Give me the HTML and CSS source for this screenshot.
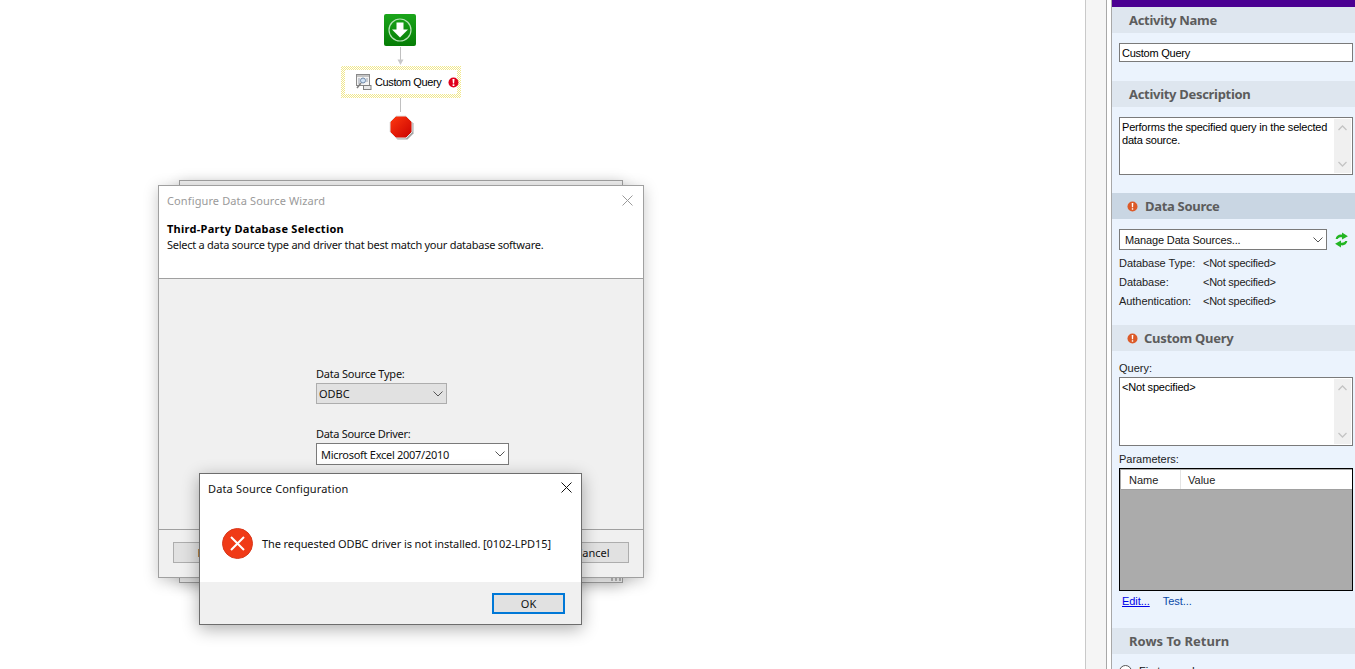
FILE: index.html
```html
<!DOCTYPE html>
<html lang="en">
<head>
<meta charset="utf-8">
<title>Custom Query</title>
<link rel="stylesheet" href="styles.css">
</head>
<body>
<main class="canvas">
  <svg class="node node-start" viewBox="0 0 32 32" width="32" height="32">
    <defs>
      <linearGradient id="g1" x1="0" y1="0" x2="0" y2="1"><stop offset="0" stop-color="#1aa51a"/><stop offset="1" stop-color="#067d06"/></linearGradient>
    </defs>
    <rect x="0" y="0" width="32" height="32" rx="2" fill="url(#g1)"/>
    <circle cx="16" cy="16" r="11" fill="none" stroke="#b5e2b5" stroke-width="1.2"/>
    <path d="M12.5 8.5h7v7h4.500l-8 8-8-8h4.500z" fill="#fff"/>
  </svg>
  <svg class="node node-link-a" viewBox="0 0 9 19" width="9" height="19">
    <path d="M4.500 0v13" stroke="#c0c0c0" stroke-width="1" fill="none"/>
    <path d="M1.500 12.500h6l-3 5.500z" fill="#c8c8c8"/>
  </svg>
  <div class="node node-activity">
    <svg class="activity-icon" viewBox="0 0 17 17" width="17" height="17">
      <rect x="1.500" y="0.500" width="13" height="11" fill="#f4f4f4" stroke="#8a8a8a"/>
      <rect x="2" y="1" width="12" height="2" fill="#c4c4c4"/>
      <path d="M3 5h2M3 7h2M3 9h2M11 5h2M11 7h2" stroke="#9aa3b0"/>
      <circle cx="8" cy="6.500" r="2.500" fill="#cfe2f5" stroke="#6f88a8"/>
      <path d="M6 9 2 14" stroke="#7d7d7d" stroke-width="1.500"/>
      <rect x="8.500" y="11.500" width="7.500" height="4" fill="#e9e9e9" stroke="#808080"/>
    </svg>
    <span class="activity-label">Custom Query</span>
    <svg class="activity-error" viewBox="0 0 11 11" width="11" height="11">
      <circle cx="5.500" cy="5.500" r="5" fill="#e0001b"/>
      <path d="M4.500 2h2l-.4 4.500h-1.200z" fill="#fff"/><rect x="4.600" y="7.300" width="1.800" height="1.700" fill="#fff"/>
    </svg>
  </div>
  <div class="node node-link-b"></div>
  <svg class="node node-stop" viewBox="0 0 26 26" width="26" height="26">
    <defs>
      <linearGradient id="g2" x1="0" y1="0" x2="1" y2="1"><stop offset="0" stop-color="#ff3a10"/><stop offset="1" stop-color="#c90000"/></linearGradient>
    </defs>
    <path d="M8.500 2.500h10l6 6v10l-6 6h-10l-6-6v-10z" fill="#a5a5a5"/>
    <path d="M7 1h10l6 6v10l-6 6H7l-6-6V7z" fill="url(#g2)" stroke="#e2e2e2"/>
  </svg>

  <div class="window window-back"><span class="gripper"></span></div>

  <section class="window wizard">
    <header class="wizard-head">
      <div class="wizard-titlebar">
        <span class="wizard-title">Configure Data Source Wizard</span>
        <svg class="close close-muted" viewBox="0 0 11 11" width="11" height="11"><path d="M.5.5l10 10M10.500.5l-10 10"/></svg>
      </div>
      <h1 class="wizard-heading">Third-Party Database Selection</h1>
      <p class="wizard-sub">Select a data source type and driver that best match your database software.</p>
    </header>
    <div class="wizard-body">
      <label class="field-label">Data Source Type:</label>
      <div class="combo combo-disabled">ODBC
        <svg class="chev" viewBox="0 0 10 6" width="10" height="6"><path d="M.5.5 5 5 9.500.5"/></svg>
      </div>
      <label class="field-label field-label-second">Data Source Driver:</label>
      <div class="combo combo-driver">Microsoft Excel 2007/2010
        <svg class="chev" viewBox="0 0 10 6" width="10" height="6"><path d="M.5.5 5 5 9.500.5"/></svg>
      </div>
    </div>
    <footer class="wizard-foot">
      <span class="btn">Help</span>
      <span class="btn">Cancel</span>
    </footer>
  </section>

  <section class="window msgbox">
    <div class="msg-main">
      <div class="msg-titlebar">
        <span>Data Source Configuration</span>
        <svg class="close" viewBox="0 0 11 11" width="11" height="11"><path d="M.5.5l10 10M10.500.5l-10 10"/></svg>
      </div>
      <div class="msg-content">
        <svg class="msg-icon" viewBox="0 0 31 31" width="31" height="31">
          <circle cx="15.500" cy="15.500" r="15" fill="#f03a17" stroke="#d8391c" stroke-width="1"/>
          <path d="M9 9l13 13M22 9 9 22" stroke="#fff" stroke-width="2" fill="none"/>
        </svg>
        <span>The requested ODBC driver is not installed. [0102-LPD15]</span>
      </div>
    </div>
    <div class="msg-foot"><span class="btn btn-default">OK</span></div>
  </section>
</main>

<div class="strip"></div>

<aside class="panel">
  <div class="panel-top"></div>

  <h2 class="sec-head">Activity Name</h2>
  <div class="sec-body body-name">
    <div class="text-input">Custom Query</div>
  </div>

  <h2 class="sec-head">Activity Description</h2>
  <div class="sec-body body-desc">
    <div class="text-area area-desc">Performs the specified query in the selected<br>data source.
      <div class="scroll">
        <svg viewBox="0 0 9 6" width="9" height="6"><path d="M.5 5 4.500 1l4 4"/></svg>
        <svg viewBox="0 0 9 6" width="9" height="6"><path d="M.5 1l4 4 4-4"/></svg>
      </div>
    </div>
  </div>

  <h2 class="sec-head sec-head-strong sec-warn">
    <svg class="warn" viewBox="0 0 11 11" width="11" height="11"><circle cx="5.500" cy="5.500" r="5" fill="#dc5a28"/><path d="M4.700 2h1.600l-.2 4.300H4.900z" fill="#fff"/><rect x="4.800" y="7.200" width="1.400" height="1.500" fill="#fff"/></svg>
    Data Source</h2>
  <div class="sec-body body-source">
    <div class="source-row">
      <div class="combo combo-source">Manage Data Sources...
        <svg class="chev" viewBox="0 0 10 6" width="10" height="6"><path d="M.5.5 5 5 9.500.5"/></svg>
      </div>
      <svg class="refresh" viewBox="0 0 14 15" width="15" height="16">
        <path d="M1.500 6.500C2 3.500 4.500 2 7.500 2.500V.5L13 4 7.500 7V5C5.500 4.800 4 5.300 3.500 6.500z" fill="#22b522"/>
        <path d="M12.500 8.500c-.5 3-3 4.500-6 4v2L1 11l5.500-3v2c2 .2 3.500-.3 4-1.500z" fill="#22b522"/>
      </svg>
    </div>
    <dl class="facts">
      <dt>Database Type:</dt><dd>&lt;Not specified&gt;</dd>
      <dt>Database:</dt><dd>&lt;Not specified&gt;</dd>
      <dt>Authentication:</dt><dd>&lt;Not specified&gt;</dd>
    </dl>
  </div>

  <h2 class="sec-head sec-warn sec-warn-tight">
    <svg class="warn" viewBox="0 0 11 11" width="11" height="11"><circle cx="5.500" cy="5.500" r="5" fill="#dc5a28"/><path d="M4.700 2h1.600l-.2 4.300H4.900z" fill="#fff"/><rect x="4.800" y="7.200" width="1.400" height="1.500" fill="#fff"/></svg>
    Custom Query</h2>
  <div class="sec-body body-query">
    <div class="small-label">Query:</div>
    <div class="text-area area-query">&lt;Not specified&gt;
      <div class="scroll">
        <svg viewBox="0 0 9 6" width="9" height="6"><path d="M.5 5 4.500 1l4 4"/></svg>
        <svg viewBox="0 0 9 6" width="9" height="6"><path d="M.5 1l4 4 4-4"/></svg>
      </div>
    </div>
    <div class="small-label label-params">Parameters:</div>
    <div class="grid">
      <div class="grid-head"><span class="col-name">Name</span><span class="col-value">Value</span></div>
      <div class="grid-empty"></div>
    </div>
    <div class="links"><a class="link-edit">Edit...</a><a class="link-test">Test...</a></div>
  </div>

  <h2 class="sec-head sec-head-wide">Rows To Return</h2>
  <div class="sec-body body-rows">
    <div class="radio-row"><span class="radio"></span>First record</div>
  </div>
</aside>
</body>
</html>
```
FILE: styles.css
```css
* { box-sizing: border-box; }
html, body { height: 100%; }
body {
  margin: 0;
  height: 669px;
  display: flex;
  overflow: hidden;
  background: #fff;
  font-family: "Noto Sans", "Liberation Sans", sans-serif;
  font-size: 11px;
  color: #111;
}

/* Free canvas: diagram nodes and floating windows */
.canvas { position: relative; flex: 0 0 1085px; height: 669px; background: #fff; }
.node { position: absolute; display: block; }
.node-start { left: 384px; top: 14px; }
.node-link-a { left: 396px; top: 47px; }
.node-activity {
  left: 341px; top: 66px; width: 120px; height: 32px;
  display: flex; align-items: center;
  padding-left: 10px;
  border: 4px solid transparent;
  background:
    linear-gradient(#fff, #fff) padding-box,
    repeating-conic-gradient(#f0e78c 0 25%, #fff 0 50%) 0 0 / 2px 2px border-box;
}
.activity-icon { flex: none; }
.activity-label { margin: 0 0 1px 3px; font-family: "Liberation Sans", sans-serif; letter-spacing: -.38px; color: #000; white-space: nowrap; }
.activity-error { flex: none; margin-left: 7px; }
.node-link-b { left: 400px; top: 98px; width: 1px; height: 14px; background: #c0c0c0; }
.node-stop { left: 389px; top: 115px; }

.window {
  position: absolute;
  background: #f0f0f0;
  border: 1px solid #a0a0a0;
  box-shadow: 0 3px 14px rgba(0,0,0,.22);
}
.window-back { left: 179px; top: 180px; width: 444px; height: 403px; }
.gripper {
  position: absolute; right: 1px; bottom: 1px; width: 10px; height: 4px;
  background: repeating-linear-gradient(90deg, #b5b5b5 0 2px, transparent 2px 4px);
}
.wizard {
  left: 158px; top: 185px; width: 486px; height: 393px;
  display: flex; flex-direction: column;
}
.wizard-head { height: 93px; background: #fff; border-bottom: 1px solid #a0a0a0; padding: 0 8px; flex: none; }
.wizard-titlebar { height: 28px; display: flex; justify-content: space-between; align-items: center; color: #9a9a9a; letter-spacing: .12px; }
.close { flex: none; margin-right: 2px; }
.close path { stroke: #111; stroke-width: 1; fill: none; }
.close-muted path { stroke: #9a9a9a; }
.wizard-heading { margin: 8px 0 0; font-size: 11px; line-height: 14px; font-weight: 700; letter-spacing: .27px; color: #000; }
.wizard-sub { margin: 2px 0 0; line-height: 14px; color: #111; letter-spacing: -.26px; }
.wizard-body { flex: 1; padding: 88px 0 0 157px; background: #f0f0f0; }
.field-label { display: block; line-height: 14px; letter-spacing: -.25px; margin-bottom: 2px; }
.field-label-second { margin-top: 23px; letter-spacing: -.3px; }
.combo {
  position: relative; display: flex; align-items: center;
  background: #fff; border: 1px solid #7a7a7a; color: #111;
}
.chev { position: absolute; right: 3px; top: 50%; margin-top: -3px; }
.chev path { fill: none; stroke: #555; stroke-width: 1; }
.combo-disabled { width: 131px; height: 21px; padding-left: 2px; background: #e1e1e1; border-color: #adadad; }
.combo-driver { width: 193px; height: 22px; padding-left: 4px; letter-spacing: -.28px; }
.wizard-foot {
  flex: none; height: 48px; display: flex; justify-content: space-between;
  padding: 12px 14px 0; background: #f0f0f0; border-top: 1px solid #a0a0a0;
}
.btn {
  width: 73px; height: 21px; display: flex; align-items: center; justify-content: center;
  background: #e1e1e1; border: 1px solid #adadad; color: #111;
}
.msgbox {
  left: 199px; top: 473px; width: 383px; height: 152px;
  display: flex; flex-direction: column;
  border-color: #6d6d6d;
  box-shadow: 0 4px 16px rgba(0,0,0,.32);
}
.msg-main { flex: 0 0 108px; background: #fff; }
.msg-titlebar { height: 29px; padding: 0 8px; display: flex; align-items: center; justify-content: space-between; letter-spacing: .15px; }
.msg-titlebar .close { margin: -2px 1px 0 0; }
.msg-content { display: flex; align-items: center; gap: 9px; padding: 25px 0 0 22px; letter-spacing: -.09px; }
.msg-icon { flex: none; }
.msg-foot { flex: 1; display: flex; justify-content: flex-end; padding: 11px 16px 0 0; background: #f0f0f0; }
.btn-default { border: 2px solid #0078d7; }

/* Strip between the canvas and the panel */
.strip {
  flex: 0 0 27px; height: 669px;
  background: linear-gradient(90deg, #c9c9c9 0 1px, #f5f5f5 1px 21px, #a8a8a8 21px 22px, #fff 22px 26px, #a8a8a8 26px);
}

/* Property panel */
.panel { flex: 1; min-width: 0; height: 669px; background: #ebf3fd; overflow: hidden; font-family: "Liberation Sans", sans-serif; }
.panel-top { height: 7px; background: #4b0092; }
.sec-head {
  margin: 0; height: 26px; padding-left: 17px;
  display: flex; align-items: center;
  background: #dee6ef; color: #5c5c5c;
  font-size: 13px; font-weight: 700;
  font-family: "Noto Sans", sans-serif;
  letter-spacing: -.3px;
}
.sec-head-strong { background: #c9d6e3; }
.sec-head-wide { letter-spacing: 0; }
.sec-warn { padding-left: 15px; gap: 7px; }
.sec-warn-tight { gap: 6px; }
.warn { flex: none; }
.sec-body { padding: 0 2px 0 7px; }
.body-name { height: 48px; padding-top: 10px; }
.body-desc { height: 86px; padding-top: 10px; }
.body-source { height: 106px; padding-top: 10px; }
.body-query { height: 277px; padding-top: 11px; }
.body-rows { padding-top: 11px; }
.text-input { height: 19px; background: #fff; border: 1px solid #7a7a7a; padding: 1px 0 0 2px; line-height: 17px; letter-spacing: -.25px; color: #000; }
.text-area { position: relative; background: #fff; border: 1px solid #7a7a7a; padding: 3px 2px 0; line-height: 13px; letter-spacing: -.2px; color: #000; }
.area-desc { height: 58px; }
.area-query { height: 69px; margin-top: 2px; }
.scroll {
  position: absolute; right: 1px; top: 1px; bottom: 1px; width: 17px;
  background: #f0f0f0; display: flex; flex-direction: column; justify-content: space-between; align-items: center;
  padding: 6px 0;
}
.scroll path { fill: none; stroke: #c4c4c4; stroke-width: 1.300; }
.source-row { display: flex; align-items: center; }
.combo-source { width: 208px; height: 21px; padding-left: 5px; letter-spacing: -.14px; }
.refresh { margin-left: 7px; flex: none; }
.facts { margin: 3px 0 0; display: grid; grid-template-columns: 84px 1fr; grid-auto-rows: 19px; align-items: center; color: #222; }
.facts dt { margin: 0; letter-spacing: -.05px; }
.facts dd { margin: 0; letter-spacing: -.25px; }
.small-label { line-height: 13px; color: #222; }
.label-params { margin-top: 7px; }
.grid { margin-top: 2px; height: 123px; border: 1px solid #000; background: #ababab; padding-top: 1px; }
.grid-head {
  margin-left: 1px; height: 20px; display: flex; align-items: stretch;
  background: #fff; border-bottom: 1px solid #a0a0a0;
  line-height: 21px; color: #222;
}
.col-name { width: 60px; padding-left: 8px; border-right: 1px solid #e4e4e4; }
.col-value { padding-left: 7px; }
.links { display: flex; margin-top: 4px; padding-left: 3px; line-height: 13px; letter-spacing: -.05px; }
.link-edit { color: #0000e8; text-decoration: underline; }
.link-test { margin-left: 13px; color: #0a4aa8; }
.radio-row { display: flex; align-items: flex-start; gap: 7px; line-height: 13px; color: #111; }
.radio { width: 13px; height: 13px; border: 1px solid #555; border-radius: 50%; background: #fff; }
```
